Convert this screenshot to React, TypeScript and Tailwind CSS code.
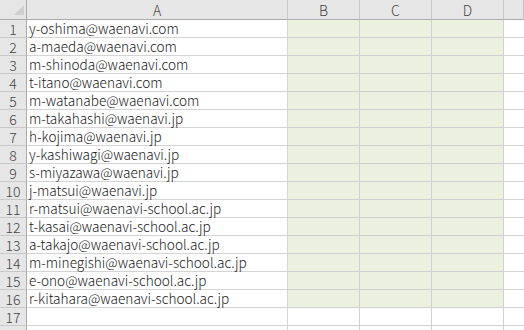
import React from "react";

const emails = [
  "y-oshima@waenavi.com",
  "a-maeda@waenavi.com",
  "m-shinoda@waenavi.com",
  "t-itano@waenavi.com",
  "m-watanabe@waenavi.com",
  "m-takahashi@waenavi.jp",
  "h-kojima@waenavi.jp",
  "y-kashiwagi@waenavi.jp",
  "s-miyazawa@waenavi.jp",
  "j-matsui@waenavi.jp",
  "r-matsui@waenavi-school.ac.jp",
  "t-kasai@waenavi-school.ac.jp",
  "a-takajo@waenavi-school.ac.jp",
  "m-minegishi@waenavi-school.ac.jp",
  "e-ono@waenavi-school.ac.jp",
  "r-kitahara@waenavi-school.ac.jp",
  "",
  "",
];

const font = { fontFamily: '"Noto Sans CJK JP", "Liberation Sans", sans-serif' };

export default function App() {
  return (
    <div
      className="w-[524px] h-[330px] overflow-hidden bg-white text-[13.6px] font-light text-[#1a1a1a]"
      style={font}
    >
      <div className="grid grid-cols-[27px_261px_72px_72px_72px_1fr] grid-rows-[20px_repeat(18,18px)]">
        <div className="relative bg-[#e6e6e6] border-r border-b border-[#ababab]">
          <div className="absolute right-[2px] bottom-[4px] w-0 h-0 border-l-[10px] border-l-transparent border-b-[10px] border-b-[#cfcfcf]" />
        </div>
        {["A", "B", "C", "D", ""].map((c, i) => (
          <div
            key={i}
            className="bg-[#e6e6e6] border-r border-r-[#c8c8c8] border-b border-b-[#ababab] flex items-center justify-center text-[#444] text-[14px] leading-[16px]"
          >
            {c}
          </div>
        ))}
        {emails.map((e, r) => {
          const filled = r < 16;
          return (
            <React.Fragment key={r}>
              <div className="bg-[#e6e6e6] border-r border-r-[#ababab] border-b border-b-[#c8c8c8] flex items-end justify-center text-[#444] text-[14px] leading-[16px]">
                {r < 17 ? r + 1 : ""}
              </div>
              <div className="border-r border-b border-[#d4d4d4] flex items-end pl-[2px] leading-[16px] pb-[1px] whitespace-nowrap">
                {e}
              </div>
              {[0, 1, 2].map((k) => (
                <div
                  key={k}
                  className={`border-r border-b border-[#d0d0d0] ${filled ? "bg-[#ebf1de]" : "bg-white"}`}
                />
              ))}
              <div className="border-b border-[#d4d4d4]" />
            </React.Fragment>
          );
        })}
      </div>
    </div>
  );
}
